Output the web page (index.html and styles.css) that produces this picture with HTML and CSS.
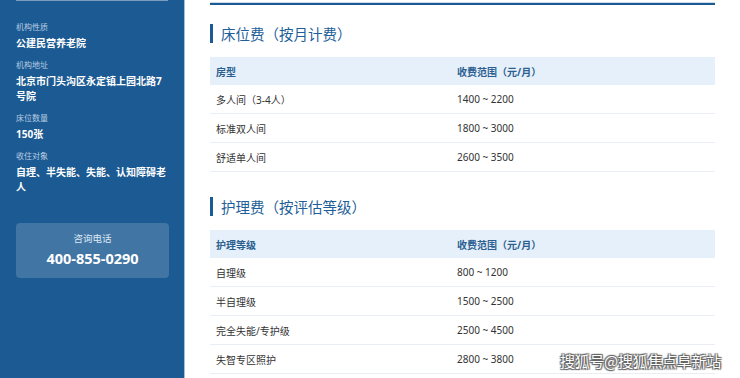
FILE: index.html
```html
<!DOCTYPE html>
<html lang="zh-CN">
<head>
<meta charset="utf-8">
<title>养老院收费</title>
<link rel="stylesheet" href="styles.css">
</head>
<body>
<div class="page">
  <aside class="side">
    <div class="side-top"></div>
    <dl class="info">
      <dt>机构性质</dt>
      <dd>公建民营养老院</dd>
      <dt>机构地址</dt>
      <dd>北京市门头沟区永定镇上园北路7号院</dd>
      <dt>床位数量</dt>
      <dd>150张</dd>
      <dt>收住对象</dt>
      <dd>自理、半失能、失能、认知障碍老人</dd>
    </dl>
    <div class="contact">
      <div class="contact-label">咨询电话</div>
      <div class="contact-phone">400-855-0290</div>
    </div>
  </aside>
  <main class="main">
    <div class="top-rule"></div>
    <section class="block">
      <h2 class="title">床位费（按月计费）</h2>
      <div class="table">
        <div class="row head"><span>房型</span><span>收费范围（元/月）</span></div>
        <div class="row"><span>多人间（3-4人）</span><span>1400 ~ 2200</span></div>
        <div class="row"><span>标准双人间</span><span>1800 ~ 3000</span></div>
        <div class="row"><span>舒适单人间</span><span>2600 ~ 3500</span></div>
      </div>
    </section>
    <section class="block second">
      <h2 class="title">护理费（按评估等级）</h2>
      <div class="table">
        <div class="row head"><span>护理等级</span><span>收费范围（元/月）</span></div>
        <div class="row"><span>自理级</span><span>800 ~ 1200</span></div>
        <div class="row"><span>半自理级</span><span>1500 ~ 2500</span></div>
        <div class="row"><span>完全失能/专护级</span><span>2500 ~ 4500</span></div>
        <div class="row"><span>失智专区照护</span><span>2800 ~ 3800</span></div>
      </div>
    </section>
  </main>
  <div class="watermark">搜狐号@搜狐焦点阜新站</div>
</div>
</body>
</html>
```

FILE: styles.css
```css
* { box-sizing: border-box; }
html, body { margin: 0; padding: 0; }
body {
  font-family: "Noto Sans", "Noto Sans CJK SC", sans-serif;
  background: #fff;
  color: #333;
}
.page {
  position: relative;
  display: flex;
  width: 740px;
  height: 378px;
  overflow: hidden;
}
.side {
  width: 185px;
  flex: none;
  background: #1b5a92;
  border-right: 1px solid #9fc0df;
  padding: 0 16px;
}
.side-top {
  height: 1px;
  background: #7d9dbf;
}
.info { margin: 19px 0 0; width: 153px; }
.info dt {
  font-size: 8px;
  line-height: 14px;
  color: #b9cde2;
  margin: 0 0 2px;
}
.info dd {
  margin: 0 0 7px;
  font-size: 10px;
  line-height: 15px;
  font-weight: 700;
  color: #fff;
}
.contact {
  margin-top: 28px;
  width: 153px;
  height: 55px;
  border-radius: 4px;
  background: rgba(255, 255, 255, 0.17);
  display: flex;
  flex-direction: column;
  align-items: center;
  padding-top: 9px;
}
.contact-label {
  font-size: 9.5px;
  line-height: 14px;
  color: #dde8f3;
}
.contact-phone {
  margin-top: 4px;
  font-family: "Open Sans", "Noto Sans", sans-serif;
  font-size: 14.5px;
  line-height: 18px;
  font-weight: 700;
  color: #fff;
}
.main {
  flex: 1;
  padding: 2px 25px 0 25px;
}
.top-rule {
  height: 3px;
  border-top: 1px solid #c9dbec;
  background: #1b5a92;
}
.block { margin-top: 19px; }
.block.second { margin-top: 25px; }
.title {
  margin: 0;
  border-left: 3px solid #1b5a92;
  padding-left: 8px;
  height: 19px;
  line-height: 19px;
  font-size: 14.5px;
  font-weight: 400;
  color: #1f5f99;
  font-family: "Noto Sans CJK SC", sans-serif;
}
.table { margin-top: 14px; }
.row {
  display: grid;
  grid-template-columns: 241px 1fr;
  height: 29px;
  align-items: center;
  padding-left: 6px;
  border-bottom: 1px solid #e9eef4;
  font-size: 10px;
  color: #333;
}
.row.head {
  height: 28px;
  background: #e6f0fa;
  border-bottom: none;
  color: #2b5f90;
  font-weight: 700;
}
.watermark {
  position: absolute;
  left: 560px;
  top: 351px;
  font-family: "Noto Sans CJK SC", sans-serif;
  font-size: 15px;
  line-height: 20px;
  color: #fff;
  letter-spacing: -0.3px;
  text-shadow: 0 0 1px #555, 1px 1px 1px #666, -1px -1px 1px #666, 1px -1px 1px #666, -1px 1px 1px #666;
}
```
